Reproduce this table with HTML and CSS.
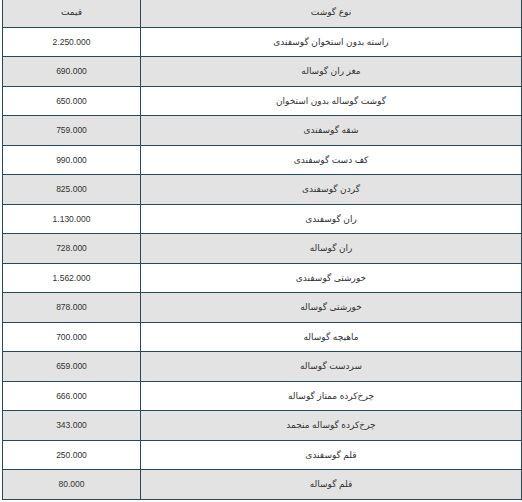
FILE: index.html
```
<!DOCTYPE html>
<html lang="fa" dir="rtl">
<head>
<meta charset="utf-8">
<title>قیمت گوشت</title>
<link rel="stylesheet" href="styles.css">
</head>
<body>
<table class="price-table">
<thead>
<tr><th class="name">نوع گوشت</th><th class="price">قیمت</th></tr>
</thead>
<tbody>
<tr><td class="name">راسته بدون استخوان گوسفندی</td><td class="price num">2.250.000</td></tr>
<tr><td class="name">مغز ران گوساله</td><td class="price num">690.000</td></tr>
<tr><td class="name">گوشت گوساله بدون استخوان</td><td class="price num">650.000</td></tr>
<tr><td class="name">شقه گوسفندی</td><td class="price num">759.000</td></tr>
<tr><td class="name">کف دست گوسفندی</td><td class="price num">990.000</td></tr>
<tr><td class="name">گردن گوسفندی</td><td class="price num">825.000</td></tr>
<tr><td class="name">ران گوسفندی</td><td class="price num">1.130.000</td></tr>
<tr><td class="name">ران گوساله</td><td class="price num">728.000</td></tr>
<tr><td class="name">خورشتی گوسفندی</td><td class="price num">1.562.000</td></tr>
<tr><td class="name">خورشتی گوساله</td><td class="price num">878.000</td></tr>
<tr><td class="name">ماهیچه گوساله</td><td class="price num">700.000</td></tr>
<tr><td class="name">سردست گوساله</td><td class="price num">659.000</td></tr>
<tr><td class="name">چرخ‌کرده ممتاز گوساله</td><td class="price num">666.000</td></tr>
<tr><td class="name">چرخ‌کرده گوساله منجمد</td><td class="price num">343.000</td></tr>
<tr><td class="name">قلم گوسفندی</td><td class="price num">250.000</td></tr>
<tr><td class="name">قلم گوساله</td><td class="price num">80.000</td></tr>
</tbody>
</table>
</body>
</html>
```
FILE: styles.css
```
html, body {
  margin: 0;
  padding: 0;
  background: #ffffff;
}
body {
  font-family: "Liberation Sans", "DejaVu Sans", sans-serif;
  font-size: 9px;
  color: #333333;
}
.price-table {
  border-collapse: collapse;
  width: 520px;
  margin: -3px 0 0 1px;
  direction: rtl;
}
.price-table th,
.price-table td {
  border: 1px solid #28495a;
  height: 28.5px;
  padding: 0;
  text-align: center;
  vertical-align: middle;
  font-weight: normal;
}
.price-table thead tr,
.price-table tbody tr:nth-child(even) {
  background: #e3e3e3;
}
.price-table tbody tr:nth-child(odd) {
  background: #ffffff;
}
.price-table .price {
  width: 137px;
}
.price-table .num {
  font-size: 8.5px;
}
```
